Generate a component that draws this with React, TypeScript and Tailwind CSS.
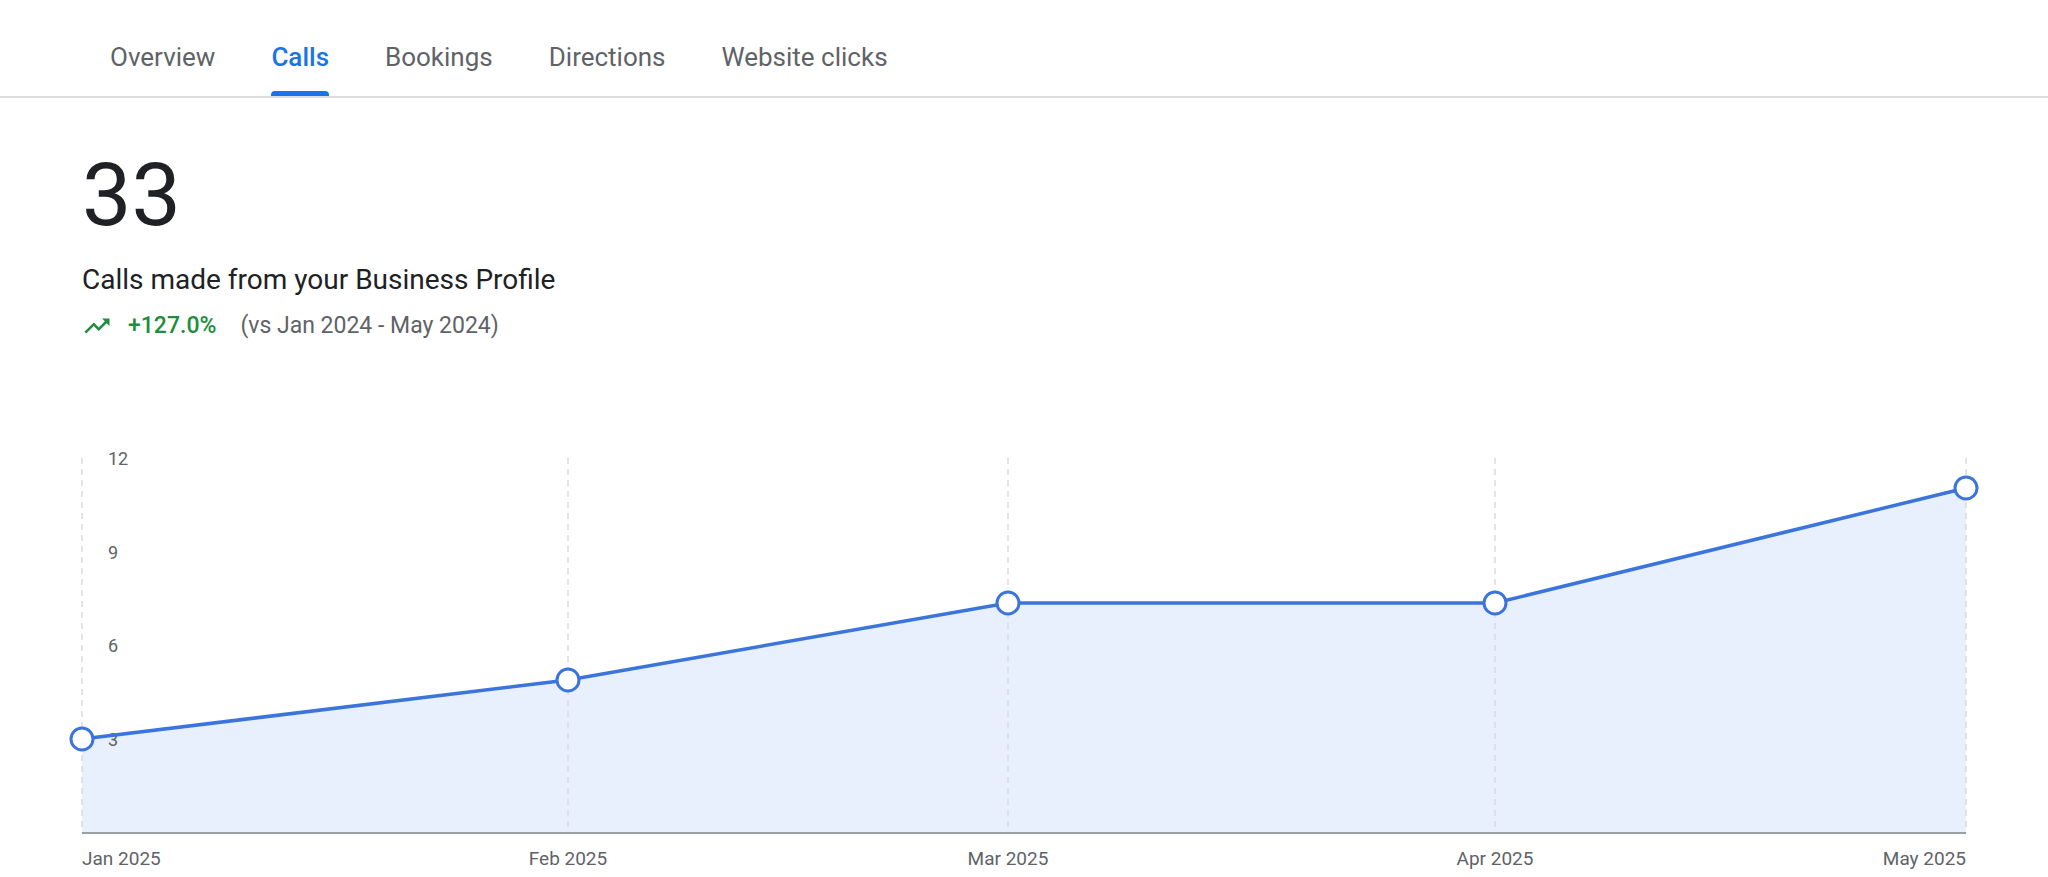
export default function App() {
  const top = 360;
  const pts = [
    [82, 686],
    [568, 627],
    [1008, 550],
    [1495, 550],
    [1966, 435],
  ].map(([x, y]) => [x, y - top]);
  const base = 780 - top;
  const line = pts.map((p) => p.join(",")).join(" ");
  const area = `82,${base} ${line} 1966,${base}`;
  const grid = [82, 568, 1008, 1495, 1966];
  const months = ["Jan 2025", "Feb 2025", "Mar 2025", "Apr 2025", "May 2025"];
  const ylab = [
    ["12", 405],
    ["9", 499],
    ["6", 592],
    ["3", 686],
  ];
  return (
    <div className="w-[2048px] h-[877px] bg-white overflow-hidden" style={{ fontFamily: "Roboto, 'Liberation Sans', sans-serif" }}>
      <div className="h-[98px] border-b-2 border-[#dadce0] flex items-end pl-[110px] gap-[56px] text-[26px] text-[#5f6368]">
        {["Overview", "Calls", "Bookings", "Directions", "Website clicks"].map((t) => (
          <div key={t} className={`relative h-full flex items-center pt-[18px] ${t === "Calls" ? "text-[#1a73e8] font-medium" : ""}`}>
            {t}
            {t === "Calls" && <div className="absolute left-0 right-0 bottom-0 h-[5px] rounded-t-[4px] bg-[#1a73e8]" />}
          </div>
        ))}
      </div>
      <div className="pl-[82px] h-[262px]">
        <div className="text-[88px] leading-none text-[#202124] mt-[53px]">33</div>
        <div className="text-[28px] text-[#202124] mt-[20px]">Calls made from your Business Profile</div>
        <div className="flex items-center mt-[8px] text-[23px]">
          <svg width="30" height="30" viewBox="0 0 24 24" fill="#1e8e3e">
            <path d="M16 6l2.29 2.29-4.88 4.88-4-4L2 16.59 3.41 18l6-6 4 4 6.3-6.29L22 12V6z" />
          </svg>
          <span className="ml-[16px] text-[#1e8e3e] font-medium">+127.0%</span>
          <span className="ml-[24px] text-[#5f6368]">(vs Jan 2024 - May 2024)</span>
        </div>
      </div>
      <svg width="2048" height="517" className="block">
        <polygon points={area} fill="#e8effd" />
        {grid.map((x) => (
          <line key={x} x1={x} x2={x} y1={405 - top} y2={base} stroke="#dadce0" strokeWidth="1.5" strokeDasharray="6 5" />
        ))}
        <line x1="82" x2="1966" y1={base} y2={base} stroke="#9aa0a6" strokeWidth="2" />
        {ylab.map(([t, y]) => (
          <text key={t} x="108" y={Number(y) - top + 7} fill="#5f6368" fontSize="18" fontFamily="Roboto, sans-serif">{t}</text>
        ))}
        <polyline points={line} fill="none" stroke="#3b74db" strokeWidth="3.5" />
        {pts.map(([x, y]) => (
          <circle key={x} cx={x} cy={y} r="11" fill="white" stroke="#3b74db" strokeWidth="3" />
        ))}
        {months.map((m, i) => (
          <text key={m} x={grid[i]} y={812 - top} fill="#5f6368" fontSize="19" fontFamily="Roboto, sans-serif"
            textAnchor={i === 0 ? "start" : i === 4 ? "end" : "middle"}>{m}</text>
        ))}
      </svg>
    </div>
  );
}
